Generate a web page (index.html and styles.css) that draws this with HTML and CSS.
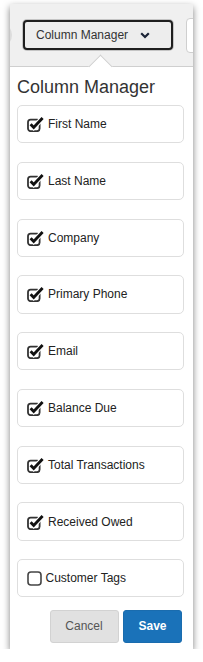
FILE: index.html
```html
<!DOCTYPE html>
<html>
<head>
<meta charset="utf-8">
<link rel="stylesheet" href="styles.css">
</head>
<body>
<div class="window">
  <div class="toolbar">
    <div class="tb-circle"></div>
    <div class="tb-button">
      <span>Column Manager</span>
      <svg class="chev" width="10" height="7" viewBox="0 0 10 7"><path d="M1.2 1.2 L5 5 L8.8 1.2" fill="none" stroke="#1b2436" stroke-width="2.2"/></svg>
    </div>
    <div class="tb-right"></div>
  </div>
  <div class="panel">
    <div class="notch"></div>
    <div class="title">Column Manager</div>
    <div class="list">
      <div class="card"><svg class="chk" width="17" height="17" viewBox="0 0 17 17"><rect x="1" y="4.6" width="11.6" height="11.6" rx="2.6" fill="none" stroke="#333" stroke-width="1.8"/><path d="M3.6 9.2 L6.7 12.4 L15.6 3" fill="none" stroke="#fff" stroke-width="5"/><path d="M3.6 9.2 L6.7 12.4 L15.6 3" fill="none" stroke="#111" stroke-width="2.9"/></svg><span>First Name</span></div>
      <div class="card"><svg class="chk" width="17" height="17" viewBox="0 0 17 17"><rect x="1" y="4.6" width="11.6" height="11.6" rx="2.6" fill="none" stroke="#333" stroke-width="1.8"/><path d="M3.6 9.2 L6.7 12.4 L15.6 3" fill="none" stroke="#fff" stroke-width="5"/><path d="M3.6 9.2 L6.7 12.4 L15.6 3" fill="none" stroke="#111" stroke-width="2.9"/></svg><span>Last Name</span></div>
      <div class="card"><svg class="chk" width="17" height="17" viewBox="0 0 17 17"><rect x="1" y="4.6" width="11.6" height="11.6" rx="2.6" fill="none" stroke="#333" stroke-width="1.8"/><path d="M3.6 9.2 L6.7 12.4 L15.6 3" fill="none" stroke="#fff" stroke-width="5"/><path d="M3.6 9.2 L6.7 12.4 L15.6 3" fill="none" stroke="#111" stroke-width="2.9"/></svg><span>Company</span></div>
      <div class="card"><svg class="chk" width="17" height="17" viewBox="0 0 17 17"><rect x="1" y="4.6" width="11.6" height="11.6" rx="2.6" fill="none" stroke="#333" stroke-width="1.8"/><path d="M3.6 9.2 L6.7 12.4 L15.6 3" fill="none" stroke="#fff" stroke-width="5"/><path d="M3.6 9.2 L6.7 12.4 L15.6 3" fill="none" stroke="#111" stroke-width="2.9"/></svg><span>Primary Phone</span></div>
      <div class="card"><svg class="chk" width="17" height="17" viewBox="0 0 17 17"><rect x="1" y="4.6" width="11.6" height="11.6" rx="2.6" fill="none" stroke="#333" stroke-width="1.8"/><path d="M3.6 9.2 L6.7 12.4 L15.6 3" fill="none" stroke="#fff" stroke-width="5"/><path d="M3.6 9.2 L6.7 12.4 L15.6 3" fill="none" stroke="#111" stroke-width="2.9"/></svg><span>Email</span></div>
      <div class="card"><svg class="chk" width="17" height="17" viewBox="0 0 17 17"><rect x="1" y="4.6" width="11.6" height="11.6" rx="2.6" fill="none" stroke="#333" stroke-width="1.8"/><path d="M3.6 9.2 L6.7 12.4 L15.6 3" fill="none" stroke="#fff" stroke-width="5"/><path d="M3.6 9.2 L6.7 12.4 L15.6 3" fill="none" stroke="#111" stroke-width="2.9"/></svg><span>Balance Due</span></div>
      <div class="card"><svg class="chk" width="17" height="17" viewBox="0 0 17 17"><rect x="1" y="4.6" width="11.6" height="11.6" rx="2.6" fill="none" stroke="#333" stroke-width="1.8"/><path d="M3.6 9.2 L6.7 12.4 L15.6 3" fill="none" stroke="#fff" stroke-width="5"/><path d="M3.6 9.2 L6.7 12.4 L15.6 3" fill="none" stroke="#111" stroke-width="2.9"/></svg><span>Total Transactions</span></div>
      <div class="card"><svg class="chk" width="17" height="17" viewBox="0 0 17 17"><rect x="1" y="4.6" width="11.6" height="11.6" rx="2.6" fill="none" stroke="#333" stroke-width="1.8"/><path d="M3.6 9.2 L6.7 12.4 L15.6 3" fill="none" stroke="#fff" stroke-width="5"/><path d="M3.6 9.2 L6.7 12.4 L15.6 3" fill="none" stroke="#111" stroke-width="2.9"/></svg><span>Received Owed</span></div>
      <div class="card"><svg class="unchk" width="15" height="15" viewBox="0 0 15 15"><rect x="1" y="1" width="13" height="13" rx="3" fill="none" stroke="#444" stroke-width="1.6"/></svg><span>Customer Tags</span></div>
    </div>
    <div class="actions">
      <button class="btn cancel">Cancel</button>
      <button class="btn save">Save</button>
    </div>
  </div>
</div>
</body>
</html>
```
FILE: styles.css
```css
html, body {
  margin: 0;
  padding: 0;
  background: #ffffff;
}
body {
  font-family: "Liberation Sans", Arial, sans-serif;
  padding-top: 4px;
  padding-left: 10px;
}
.window {
  width: 183px;
  height: 645px;
  box-shadow: 0 3px 7px rgba(0, 0, 0, 0.5);
  background: #ffffff;
  display: flex;
  flex-direction: column;
}
.toolbar {
  height: 62px;
  background: #f0f0f0;
  display: flex;
  align-items: center;
  overflow: hidden;
  flex: none;
}
.tb-circle {
  width: 24px;
  height: 24px;
  border-radius: 50%;
  background: #dcdcdc;
  margin-left: -22px;
  flex: none;
}
.tb-button {
  flex: none;
  box-sizing: border-box;
  width: 150px;
  height: 30px;
  margin-left: 11px;
  border: 2px solid #1e1e1e;
  border-radius: 4px;
  box-shadow: 0 0 0 1px #c4c4c4;
  background: #ededed;
  display: flex;
  align-items: center;
  padding-left: 11px;
  font-size: 12px;
  color: #333;
}
.chev {
  margin-left: 12px;
}
.tb-right {
  flex: none;
  width: 40px;
  height: 33px;
  margin-left: 13px;
  background: #ffffff;
  border: 1px solid #cfcfcf;
  border-radius: 4px;
}
.panel {
  position: relative;
  flex: 1;
  border-top: 1px solid #cfcfcf;
  padding: 10px 9px 7px 7px;
  display: flex;
  flex-direction: column;
}
.notch {
  position: absolute;
  left: 82px;
  top: -9.5px;
  width: 16px;
  height: 16px;
  background: #ffffff;
  border-top: 1px solid #cfcfcf;
  border-left: 1px solid #cfcfcf;
  transform: rotate(45deg);
}
.title {
  position: relative;
  font-size: 18px;
  line-height: 21px;
  color: #333;
  margin-bottom: 7px;
}
.list {
  display: flex;
  flex-direction: column;
  gap: 18.6px;
}
.card {
  box-sizing: border-box;
  height: 38.2px;
  border: 1px solid #dedede;
  border-radius: 5px;
  display: flex;
  align-items: center;
  padding-left: 8.5px;
  font-size: 12px;
  color: #222;
}
.chk {
  margin-right: 4.5px;
  margin-top: -1px;
}
.unchk {
  margin-right: 4px;
  margin-top: 1px;
}
.actions {
  display: flex;
  justify-content: flex-end;
  gap: 4.5px;
  margin-top: 12.5px;
  padding-right: 2px;
}
.btn {
  height: 33px;
  border-radius: 3px;
  font-family: "Liberation Sans", Arial, sans-serif;
  font-size: 12px;
  padding: 0;
}
.cancel {
  width: 69px;
  background: #e1e1e1;
  border: 1px solid #d2d2d2;
  color: #555;
}
.save {
  width: 59px;
  background: #1a72b9;
  border: 1px solid #1a6cae;
  color: #ffffff;
  font-weight: bold;
}
```
